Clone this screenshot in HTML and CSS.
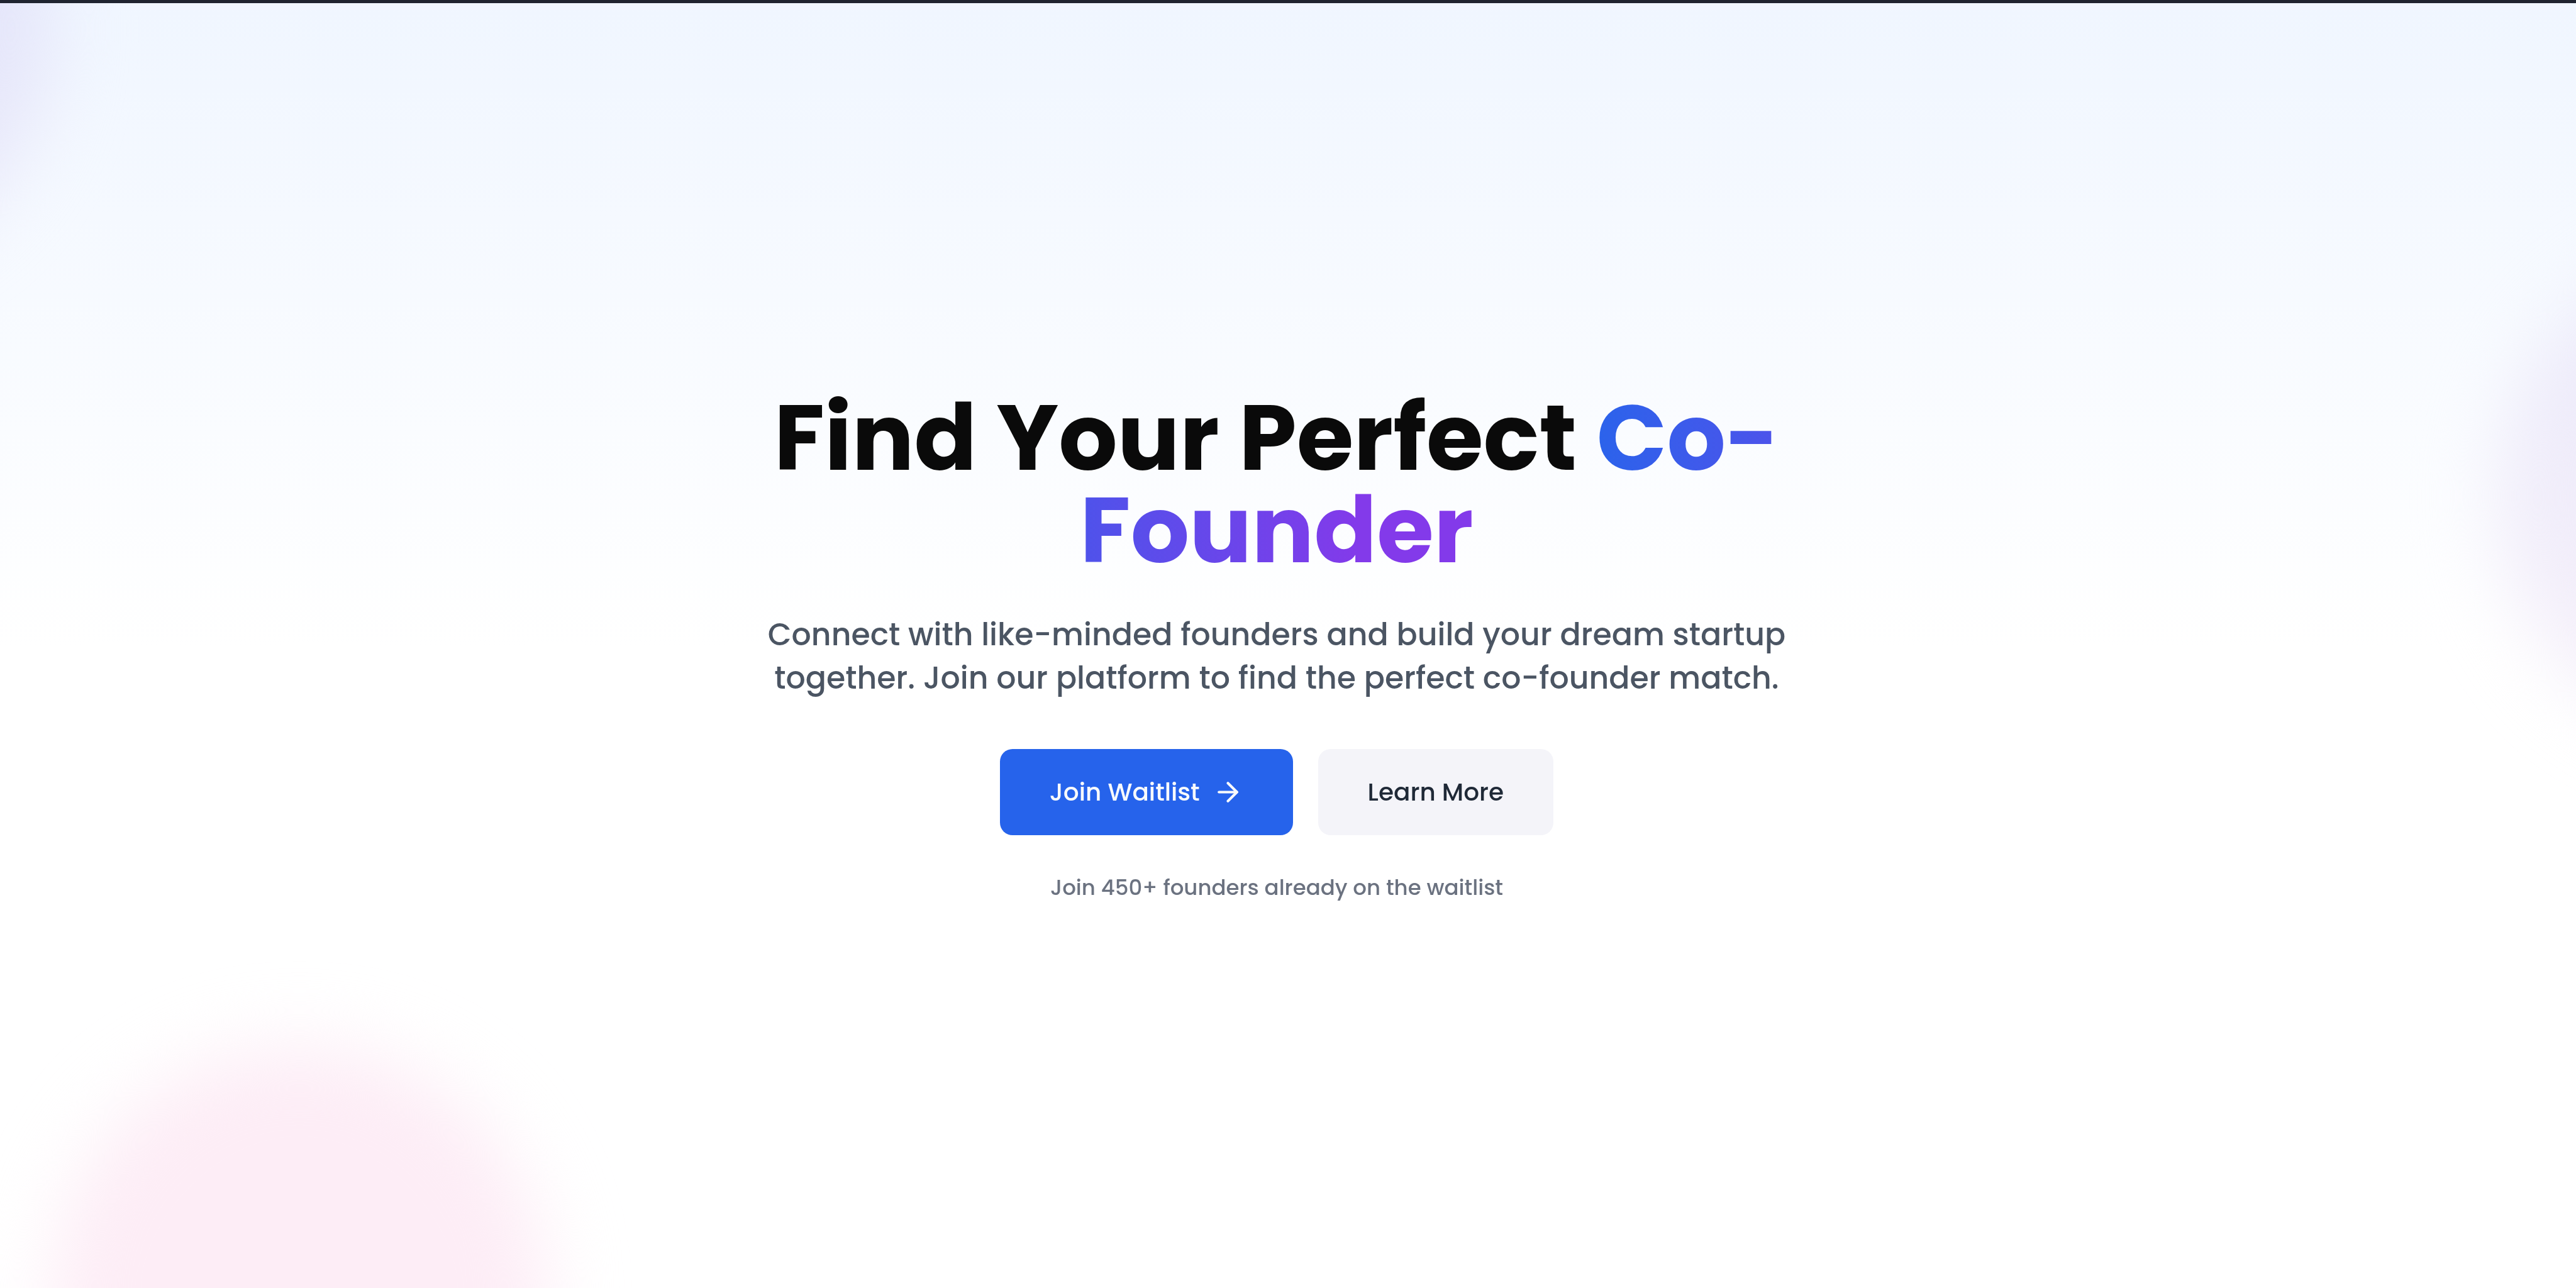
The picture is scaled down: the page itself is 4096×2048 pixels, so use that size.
FILE: index.html
```html
<!DOCTYPE html>
<html lang="en">
<head>
  <meta charset="utf-8">
  <meta name="viewport" content="width=device-width, initial-scale=1">
  <title>Find Your Perfect Co-Founder</title>
  <link rel="stylesheet" href="styles.css">
</head>
<body>
  <main class="hero">
    <div class="blob blob-left" aria-hidden="true"></div>
    <div class="blob blob-right" aria-hidden="true"></div>
    <div class="blob blob-bottom" aria-hidden="true"></div>

    <div class="hero-content">
      <h1 class="hero-title">Find Your Perfect <span class="hero-accent">Co-<br>Founder</span></h1>
      <p class="hero-lead">Connect with like-minded founders and build your dream startup<br>together. Join our platform to find the perfect co-founder match.</p>
      <div class="hero-actions">
        <button type="button" class="btn btn-primary">
          Join Waitlist
          <svg class="btn-icon" viewBox="0 0 24 24" fill="none" stroke="currentColor" stroke-width="2" stroke-linecap="round" stroke-linejoin="round" aria-hidden="true">
            <path d="M5 12h14"/>
            <path d="m12 5 7 7-7 7"/>
          </svg>
        </button>
        <button type="button" class="btn btn-secondary">Learn More</button>
      </div>
      <p class="hero-note">Join 450+ founders already on the waitlist</p>
    </div>
  </main>
</body>
</html>
```
FILE: styles.css
```css
*,
*::before,
*::after {
  box-sizing: border-box;
}

body {
  margin: 0;
  font-family: Poppins, Inter, "Open Sans", sans-serif;
  font-weight: 500;
  color: #0a0a0a;
  background: #ffffff;
}

.hero {
  position: relative;
  display: flex;
  align-items: center;
  justify-content: center;
  min-height: 100vh;
  padding: 80px 36px 76px 0;
  overflow: hidden;
  border-top: 5px solid #1f2430;
  background: linear-gradient(to bottom, #f0f6ff 0%, #ffffff 50%);
}

.blob {
  position: absolute;
  width: 784px;
  height: 784px;
  border-radius: 50%;
  filter: blur(58px);
  mix-blend-mode: multiply;
}

.blob-left,
.blob-right {
  background: #f4effa;
}

.blob-left {
  top: -350px;
  left: -700px;
}

.blob-right {
  top: 392px;
  right: -656px;
}

.blob-bottom {
  bottom: -400px;
  left: 84px;
  background: #fdedf6;
}

.hero-content {
  position: relative;
  display: flex;
  flex-direction: column;
  align-items: center;
  text-align: center;
  white-space: nowrap;
}

.hero-title {
  margin: 0 0 59px;
  font-size: 147px;
  line-height: 147px;
  font-weight: 700;
}

.hero-accent {
  color: transparent;
  background: linear-gradient(to right, #2b63eb, #833aea 80%);
  -webkit-background-clip: text;
  background-clip: text;
}

.hero-lead {
  margin: 0 0 78px;
  font-size: 49px;
  line-height: 69px;
  color: #4b5563;
}

.hero-actions {
  display: flex;
  gap: 40px;
  margin-bottom: 59px;
}

.btn {
  display: inline-flex;
  align-items: center;
  justify-content: center;
  gap: 20px;
  height: 137px;
  padding: 0 79px;
  border: 0;
  border-radius: 20px;
  font: inherit;
  font-size: 39px;
  line-height: 59px;
  cursor: pointer;
}

.btn-primary {
  color: #f8fafc;
  background: #2663eb;
}

.btn-secondary {
  color: #1f2937;
  background: #f4f4f9;
}

.btn-icon {
  width: 49px;
  height: 49px;
}

.hero-note {
  margin: 0;
  font-size: 34px;
  line-height: 49px;
  color: #6b7280;
}
```
